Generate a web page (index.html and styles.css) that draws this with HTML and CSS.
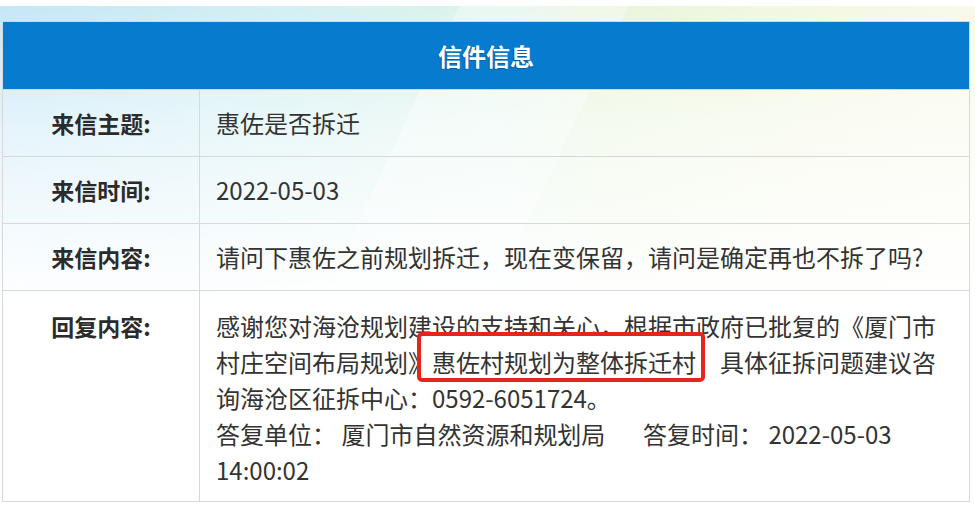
FILE: index.html
```html
<!DOCTYPE html>
<html lang="zh-CN">
<head>
  <meta charset="UTF-8">
  <meta name="viewport" content="width=device-width, initial-scale=1.0">
  <title>信件信息</title>
  <link rel="stylesheet" href="styles.css">
</head>
<body>
  <div class="page">
    <table class="letter">
      <colgroup>
        <col class="col-label">
        <col>
      </colgroup>
      <tr>
        <th colspan="2" class="letter-head">信件信息</th>
      </tr>
      <tr>
        <td class="label">来信主题:</td>
        <td class="value">惠佐是否拆迁</td>
      </tr>
      <tr>
        <td class="label">来信时间:</td>
        <td class="value">2022-05-03</td>
      </tr>
      <tr>
        <td class="label">来信内容:</td>
        <td class="value">请问下惠佐之前规划拆迁，现在变保留，请问是确定再也不拆了吗?</td>
      </tr>
      <tr class="reply">
        <td class="label">回复内容:</td>
        <td class="value">感谢您对海沧规划建设的支持和关心，根据市政府已批复的《厦门市村庄空间布局规划》<span class="mark">惠佐村规划为整体拆迁村</span>，具体征拆问题建议咨询海沧区征拆中心：0592-6051724。<br>答复单位：&nbsp;厦门市自然资源和规划局&nbsp;&nbsp;&nbsp;&nbsp;&nbsp;&nbsp;&nbsp;答复时间：&nbsp;2022-05-03 14:00:02</td>
      </tr>
    </table>
  </div>
</body>
</html>
```

FILE: styles.css
```css
* {
  box-sizing: border-box;
}
body {
  margin: 0;
  background: #fff;
  font-family: "Noto Sans CJK SC", "Noto Sans", sans-serif;
  color: #333;
}
.page {
  margin-top: 6px;
  padding: 15px 0 5px 2px;
  height: 501px;
  background:
    linear-gradient(to bottom, rgba(255,255,255,0) 0, rgba(255,255,255,0.55) 120px, #fff 300px),
    linear-gradient(115deg, rgba(255,255,255,0) 0 38%, rgba(255,255,255,0.35) 38% 52%, rgba(255,255,255,0) 52%),
    linear-gradient(to right, #c6e6f7 0, #d3f0f2 30%, #dff4ea 52%, #e9f5dc 62%, #f4f8e4 85%, #f8f9ea 100%);
}
.letter {
  width: 968px;
  border-collapse: collapse;
  border: 1px solid #d9d9d9;
}
.col-label {
  width: 197px;
}
.letter-head {
  height: 68px;
  padding: 0;
  background: #077bce;
  color: #fff;
  font-size: 24px;
  font-weight: bold;
  text-align: center;
  text-shadow: -1px 1px 1px rgba(0, 40, 80, 0.35);
}
.letter td {
  border: 1px solid #d9d9d9;
  padding: 15px 16px;
  line-height: 36px;
}
.label {
  text-align: center;
  font-size: 23px;
  font-weight: bold;
  vertical-align: top;
  color: #2b2b2b;
}
.value {
  font-size: 24px;
}
.reply td {
  padding-top: 17px;
  padding-bottom: 13px;
}
.mark {
  position: relative;
  z-index: 0;
}
.mark::before {
  content: "";
  position: absolute;
  left: -15px;
  right: -9px;
  top: -12px;
  bottom: -3px;
  z-index: -1;
  background: #fff;
  border: 4px solid #e8231c;
  border-radius: 5px;
}
```
